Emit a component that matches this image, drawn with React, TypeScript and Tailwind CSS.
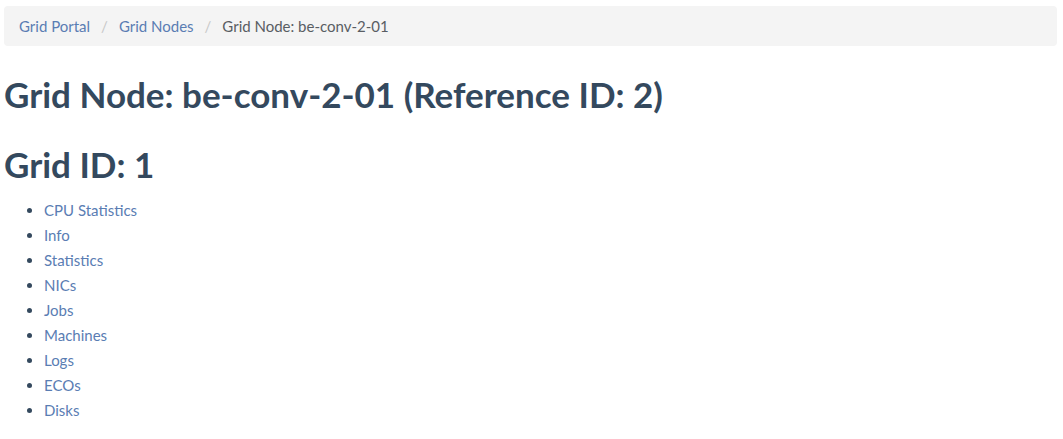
const crumbs = [
  { label: 'Grid Portal', href: '#' },
  { label: 'Grid Nodes', href: '#' },
];

const links = ['CPU Statistics', 'Info', 'Statistics', 'NICs', 'Jobs', 'Machines', 'Logs', 'ECOs', 'Disks'];

export default function App() {
  return (
    <div className="min-h-screen bg-white pt-[6px] pl-[4px] pr-[6px] font-['Lato','Liberation_Sans',sans-serif] text-[#34495e]">
      {/* Breadcrumb */}
      <ol className="flex items-center h-[40px] px-[15px] mb-[28px] rounded-[4px] bg-[#f4f4f4] text-[15px]">
        {crumbs.map((c) => (
          <li key={c.label} className="flex items-center">
            <a href={c.href} className="text-[#5a7db3]">{c.label}</a>
            <span className="px-[11px] text-[#c8c8c8]">/</span>
          </li>
        ))}
        <li className="text-[#595d63]">Grid Node: be-conv-2-01</li>
      </ol>

      <h1 className="text-[35px] leading-[40px] font-bold mb-[30px]">Grid Node: be-conv-2-01 (Reference ID: 2)</h1>
      <h2 className="text-[35px] leading-[40px] font-bold mb-[14px]">Grid ID: 1</h2>

      <ul className="list-disc pl-[40px] text-[15px] leading-[25px] marker:text-[#34495e]">
        {links.map((l) => (
          <li key={l}>
            <a href="#" className="text-[#5a7db3]">{l}</a>
          </li>
        ))}
      </ul>
    </div>
  );
}
